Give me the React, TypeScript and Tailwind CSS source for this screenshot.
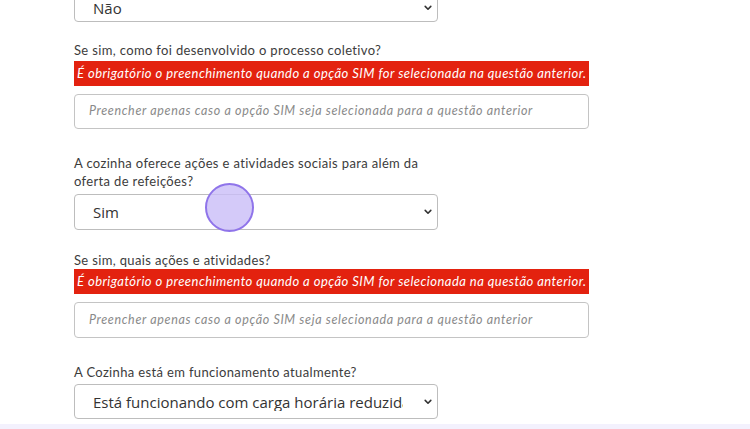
import React from 'react';

const PLACEHOLDER = 'Preencher apenas caso a opção SIM seja selecionada para a questão anterior';
const REQUIRED = 'É obrigatório o preenchimento quando a opção SIM for selecionada na questão anterior.';

function Chevron() {
  return (
    <svg width="8" height="6" viewBox="0 0 8 6" className="shrink-0">
      <path d="M1.2 1.4 L4 4.2 L6.8 1.4" fill="none" stroke="#333" strokeWidth="1.6" strokeLinecap="round" strokeLinejoin="round" />
    </svg>
  );
}

function FakeSelect({ value, className = '' }: { value: string; className?: string }) {
  return (
    <div
      className={`flex w-[364px] items-center justify-between rounded-[4px] border border-[#bdbdbd] bg-white pl-[18px] pr-[5px] ${className}`}
    >
      <span className="w-[310px] overflow-hidden whitespace-nowrap text-[15px] leading-[18px] text-[#333] [font-family:'Open_Sans',sans-serif]">
        {value}
      </span>
      <Chevron />
    </div>
  );
}

function Label({ children, className = '' }: { children: React.ReactNode; className?: string }) {
  return (
    <p className={`w-[380px] text-[13px] leading-[18px] tracking-[0.35px] text-[#3c3c3c] ${className}`}>{children}</p>
  );
}

function Required({ className = '' }: { className?: string }) {
  return (
    <div className={`flex h-[25px] w-[515px] items-center bg-[#e3220f] pl-[3px] text-[13px] italic text-white ${className}`}>
      <span className="whitespace-nowrap tracking-[0.45px]">{REQUIRED}</span>
    </div>
  );
}

function TextBox({ className = '' }: { className?: string }) {
  return (
    <div className={`flex w-[515px] items-center rounded-[4px] border border-[#c4c4c4] bg-white pl-[14px] ${className}`}>
      <span className="whitespace-nowrap text-[12.5px] italic tracking-[0.65px] text-[#8a8a8a]">{PLACEHOLDER}</span>
    </div>
  );
}

export default function App() {
  return (
    <div className="relative h-[429px] w-[750px] overflow-hidden bg-white [font-family:Lato,'Liberation_Sans',sans-serif]">
      <div className="flex flex-col pl-[74px]">
        <FakeSelect value="Não" className="mt-[-7px] h-[29px]" />

        <Label className="mt-[19px]">Se sim, como foi desenvolvido o processo coletivo?</Label>
        <Required className="mt-[2px]" />
        <TextBox className="mt-[8px] h-[35px]" />

        <Label className="mt-[25px]">
          A cozinha oferece ações e atividades sociais para além da oferta de refeições?
        </Label>
        <FakeSelect value="Sim" className="mt-[4px] h-[36px]" />

        <Label className="mt-[21px]">Se sim, quais ações e atividades?</Label>
        <Required className="mt-[0px]" />
        <TextBox className="mt-[8px] h-[36px]" />

        <Label className="mt-[25px]">A Cozinha está em funcionamento atualmente?</Label>
        <FakeSelect value="Está funcionando com carga horária reduzida" className="mt-[3px] h-[35px]" />
      </div>

      <div className="absolute bottom-0 left-0 h-[5px] w-full bg-[#f3f1fd]" />

      <div className="absolute left-[205px] top-[183px] h-[49px] w-[49px] rounded-full border-2 border-[#8f74ea] bg-[#c9bdf8]/80" />
    </div>
  );
}
